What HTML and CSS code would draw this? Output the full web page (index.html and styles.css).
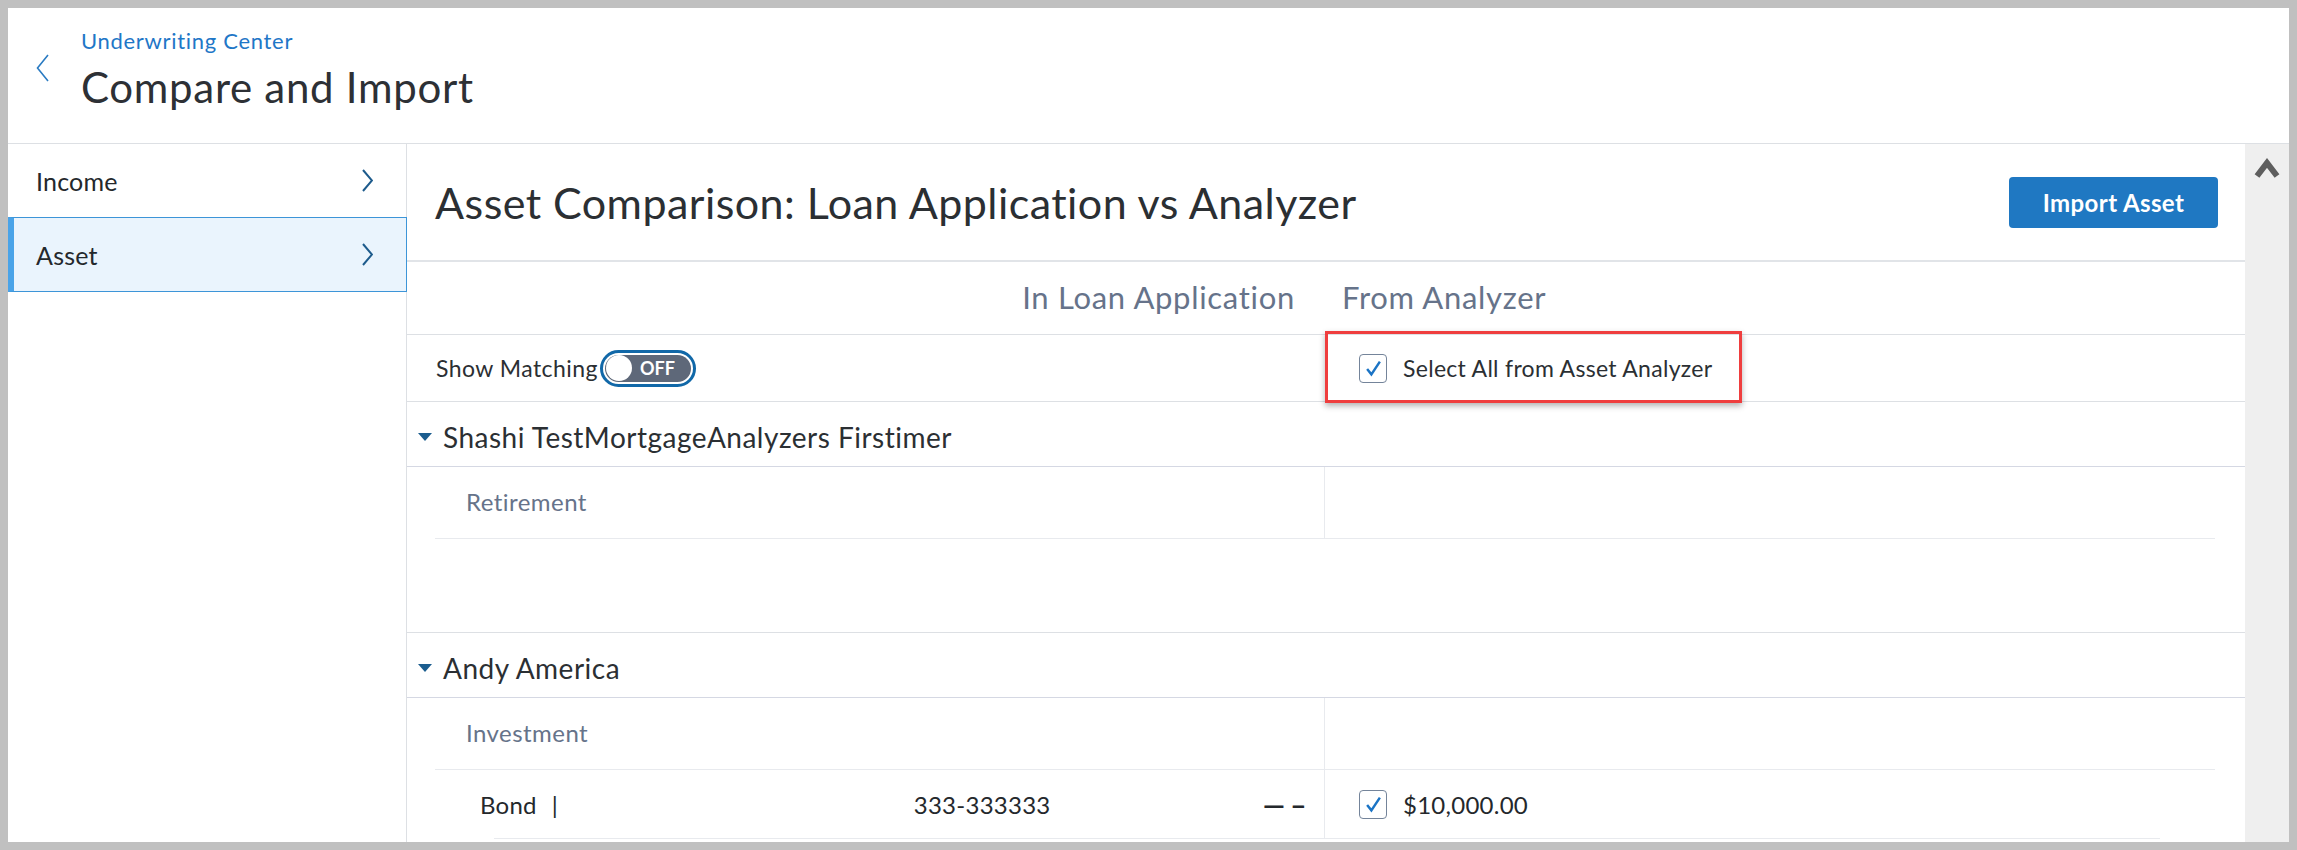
FILE: index.html
```html
<html>
    <head>
        <meta charset="utf-8">
        <title>Compare and Import</title>
        <link rel="stylesheet" href="styles.css">
    </head>
    <body>
        <div class="app">
            <div class="page-head">
                <svg class="back" width="13" height="28" viewBox="0 0 13 28"><polyline points="12,1 1.5,14 12,27" fill="none" stroke="#2a7bc2" stroke-width="1.6"/></svg>
                <div class="head-text">
                    <a class="crumb">Underwriting Center</a>
                    <div class="page-title">Compare and Import</div>
                </div>
            </div>
            <div class="body">
                <div class="side">
                    <div class="side-item">
                        <span>Income</span>
                        <svg width="11" height="23" viewBox="0 0 11 23"><polyline points="1,1 10,11.5 1,22" fill="none" stroke="#1d5b8c" stroke-width="2"/></svg>
                    </div>
                    <div class="side-item active">
                        <span>Asset</span>
                        <svg width="11" height="23" viewBox="0 0 11 23"><polyline points="1,1 10,11.5 1,22" fill="none" stroke="#1d5b8c" stroke-width="2"/></svg>
                    </div>
                </div>
                <div class="main">
                    <div class="title-row">
                        <div class="cmp-title">Asset Comparison: Loan Application vs Analyzer</div>
                        <button class="btn-import">Import Asset</button>
                    </div>
                    <div class="col-head">
                        <div class="col-left">In Loan Application</div>
                        <div class="col-right">From Analyzer</div>
                    </div>
                    <div class="match-row">
                        <div class="match-left">
                            <span>Show Matching</span>
                            <span class="toggle"><span class="toggle-in"><span class="knob"></span>OFF</span></span>
                        </div>
                        <div class="match-right">
                            <span class="callout"></span>
                            <span class="check"><svg width="17" height="17" viewBox="0 0 16 16"><polyline points="2,8.5 6,13.5 14,1.5" fill="none" stroke="#1b74c5" stroke-width="2.3"/></svg></span>
                            <span>Select All from Asset Analyzer</span>
                        </div>
                    </div>
                    <div class="group">
                        <svg width="14" height="8" viewBox="0 0 14 8"><polygon points="0,0 14,0 7,8" fill="#1b5d8f"/></svg>
                        <span>Shashi TestMortgageAnalyzers Firstimer</span>
                    </div>
                    <div class="sub-row">
                        <div class="sub-left">Retirement</div>
                        <div class="sub-right"></div>
                    </div>
                    <div class="spacer"></div>
                    <div class="group">
                        <svg width="14" height="8" viewBox="0 0 14 8"><polygon points="0,0 14,0 7,8" fill="#1b5d8f"/></svg>
                        <span>Andy America</span>
                    </div>
                    <div class="sub-row">
                        <div class="sub-left">Investment</div>
                        <div class="sub-right"></div>
                    </div>
                    <div class="item-row">
                        <div class="item-left">
                            <div class="item-in">
                                <span class="item-name">Bond</span>
                                <span class="item-bar">|</span>
                                <span class="item-acct">333-333333</span>
                                <span class="item-dash">—–</span>
                            </div>
                        </div>
                        <div class="item-right">
                            <div class="item-in">
                                <span class="check"><svg width="17" height="17" viewBox="0 0 16 16"><polyline points="2,8.5 6,13.5 14,1.5" fill="none" stroke="#1b74c5" stroke-width="2.3"/></svg></span>
                                <span>$10,000.00</span>
                            </div>
                        </div>
                    </div>
                </div>
                <div class="scrollbar">
                    <svg width="26" height="22" viewBox="0 0 26 22"><polyline points="3,19 13,6 23,19" fill="none" stroke="#5e5e5e" stroke-width="6"/></svg>
                </div>
            </div>
        </div>
    </body>
</html>
```
FILE: styles.css
```css
body {
    margin: 0;
    padding: 8px;
    background: #c0c0c0;
    font-family: Lato, "Open Sans", sans-serif;
    color: #2b2f33;
}
.app {
    background: #fff;
    height: 834px;
    overflow: hidden;
    display: flex;
    flex-direction: column;
}
.page-head {
    height: 136px;
    box-sizing: border-box;
    border-bottom: 1px solid #dde0e4;
    display: flex;
    align-items: flex-start;
    padding-left: 28px;
}
.back {
    margin-top: 46px;
}
.head-text {
    margin-left: 32px;
    padding-top: 20px;
    display: flex;
    flex-direction: column;
}
.crumb {
    font-size: 22px;
    letter-spacing: 0.7px;
    line-height: 26px;
    color: #1f77c7;
}
.page-title {
    font-size: 42px;
    letter-spacing: 0.7px;
    line-height: 48px;
    margin-top: 9px;
    color: #2d3035;
}
.body {
    flex: 1;
    display: flex;
}
.side {
    width: 399px;
    box-sizing: border-box;
    border-right: 1px solid #dde0e4;
}
.side-item {
    height: 73px;
    box-sizing: border-box;
    display: flex;
    align-items: center;
    justify-content: space-between;
    padding: 0 33px 0 28px;
    font-size: 25px;
    letter-spacing: 0.2px;
    color: #24282c;
}
.side-item.active {
    height: 75px;
    background: #eaf4fd;
    border: 1px solid #3d95d8;
    border-left: 6px solid #4aa3e8;
    padding-left: 22px;
    margin-right: -1px;
    padding-right: 33px;
}
.main {
    flex: 1;
    display: flex;
    flex-direction: column;
}
.title-row {
    height: 118px;
    box-sizing: border-box;
    border-bottom: 2px solid #e1e4e8;
    display: flex;
    align-items: center;
    justify-content: space-between;
    padding: 0 27px 0 28px;
}
.cmp-title {
    font-size: 43px;
    letter-spacing: 0.45px;
    color: #2b2f33;
}
.btn-import {
    width: 209px;
    height: 51px;
    border: none;
    border-radius: 4px;
    background: #1f78c2;
    color: #fff;
    font-family: Lato, sans-serif;
    font-weight: bold;
    font-size: 24px;
    letter-spacing: 0.4px;
}
.col-head {
    height: 73px;
    box-sizing: border-box;
    border-bottom: 1px solid #dde0e4;
    display: grid;
    grid-template-columns: 1fr 1fr;
    padding: 0 30px 0 28px;
    align-items: center;
    font-size: 31px;
    letter-spacing: 0.7px;
    color: #66738a;
}
.col-left {
    text-align: right;
    padding-right: 30px;
    margin-top: -3px;
}
.col-right {
    padding-left: 17px;
    margin-top: -3px;
}
.match-row {
    height: 67px;
    box-sizing: border-box;
    border-bottom: 1px solid #dde0e4;
    display: grid;
    grid-template-columns: 1fr 1fr;
    padding: 0 30px 0 28px;
    font-size: 23px;
}
.match-left {
    display: flex;
    align-items: center;
    padding-left: 1px;
    letter-spacing: 0.45px;
}
.toggle {
    margin-left: 2px;
    width: 96px;
    height: 37px;
    box-sizing: border-box;
    border: 3px solid #1168a8;
    border-radius: 19px;
    padding: 2px;
    display: flex;
    letter-spacing: 0;
}
.toggle-in {
    flex: 1;
    background: #5e6879;
    border-radius: 15px;
    display: flex;
    align-items: center;
    color: #fff;
    font-weight: bold;
    font-size: 18px;
    padding-left: 1px;
}
.knob {
    width: 26px;
    height: 26px;
    border-radius: 50%;
    background: #fff;
    margin-right: 8px;
}
.match-right {
    position: relative;
    display: flex;
    align-items: center;
    padding-left: 34px;
    letter-spacing: 0.3px;
}
.callout {
    position: absolute;
    left: 0;
    top: -4px;
    width: 417px;
    height: 72px;
    box-sizing: border-box;
    border: 3px solid #ef3e3e;
    box-shadow: 0 3px 6px rgba(0, 0, 0, 0.3);
}
.check {
    width: 28px;
    height: 29px;
    box-sizing: border-box;
    border: 1.5px solid #74849a;
    border-radius: 4px;
    display: flex;
    align-items: center;
    justify-content: center;
    margin-right: 16px;
}
.group {
    height: 65px;
    box-sizing: border-box;
    border-bottom: 1px solid #d5d8e3;
    display: flex;
    align-items: center;
    padding: 5px 0 0 11px;
    font-size: 28px;
    letter-spacing: 0.5px;
    color: #2b2f33;
}
.group svg {
    margin-right: 11px;
}
.sub-row {
    height: 71px;
    box-sizing: border-box;
    margin: 0 30px 0 28px;
    border-bottom: 1px solid #e8eaee;
    display: grid;
    grid-template-columns: 1fr 1fr;
    font-size: 24px;
    letter-spacing: 0.45px;
    color: #66738a;
}
.sub-left {
    border-right: 1px solid #e8eaee;
    display: flex;
    align-items: center;
    padding-left: 31px;
}
.spacer {
    height: 94px;
    box-sizing: border-box;
    border-bottom: 1px solid #dde0e4;
}
.group + .sub-row {
    height: 72px;
}
.group + .sub-row .sub-left {
    padding-bottom: 2px;
}
.item-row {
    height: 69px;
    margin: 0 30px 0 28px;
    display: grid;
    grid-template-columns: 1fr 1fr;
    font-size: 24px;
    letter-spacing: 0.25px;
    color: #24282c;
}
.item-left, .item-right {
    display: flex;
}
.item-left {
    border-right: 1px solid #e8eaee;
}
.item-in {
    flex: 1;
    display: flex;
    align-items: center;
    border-bottom: 1px solid #e8eaee;
}
.item-left .item-in {
    margin-left: 59px;
}
.item-right .item-in {
    margin-right: 55px;
    padding-left: 34px;
}
.item-name {
    margin-left: -14px;
}
.item-bar {
    margin-left: 15px;
    width: 362px;
}
.item-acct {
    width: 349px;
}
.item-dash {
    font-weight: bold;
    letter-spacing: 5px;
    font-size: 28px;
}
.scrollbar {
    width: 44px;
    background: #efefef;
    display: flex;
    justify-content: center;
    padding-top: 13px;
    align-items: flex-start;
}
```
